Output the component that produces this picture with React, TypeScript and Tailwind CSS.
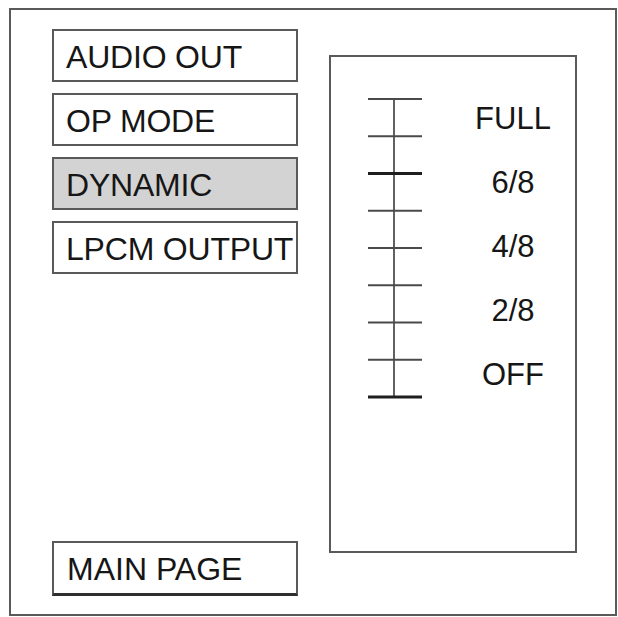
const menu = [
  { label: "AUDIO OUT", active: false },
  { label: "OP MODE", active: false },
  { label: "DYNAMIC", active: true },
  { label: "LPCM OUTPUT", active: false },
]

const levels = ["FULL", "6/8", "4/8", "2/8", "OFF"]

// 9 ticks, thick ones mark the current level and the bottom end
const ticks = [0, 1, 2, 3, 4, 5, 6, 7, 8]
const thick = [2, 8]

function Scale() {
  const step = 37.25
  return (
    <svg width="54" height="302" viewBox="0 0 54 302" className="block">
      <line x1="26" y1="1" x2="26" y2="299" stroke="#3a3a3a" strokeWidth="1.6" />
      {ticks.map((i) => (
        <line
          key={i}
          x1="0"
          x2="54"
          y1={1 + i * step}
          y2={1 + i * step}
          stroke={thick.includes(i) ? "#1e1e1e" : "#4a4a4a"}
          strokeWidth={thick.includes(i) ? 3 : 1.8}
        />
      ))}
    </svg>
  )
}

export default function App() {
  return (
    <div className="w-[618px] h-[617px] bg-white pl-[9px] pt-[8px] font-['Liberation_Sans',Arial,sans-serif] text-[#161616]">
      <div className="w-[608px] h-[608px] border-2 border-[#5a5a5a] flex pl-[41px] pt-[19px] pb-[18px]">
        {/* Menu column */}
        <div className="w-[246px] flex flex-col justify-between">
          <div className="flex flex-col gap-[11px]">
            {menu.map((item) => (
              <div
                key={item.label}
                className={`h-[53px] border-2 border-[#5a5a5a] flex items-center pl-[12px] pt-[3px] text-[32px] leading-none tracking-[-0.2px] whitespace-nowrap ${
                  item.active ? "bg-[#d3d3d3]" : "bg-white"
                }`}
              >
                {item.label}
              </div>
            ))}
          </div>
          <div className="h-[55px] border-2 border-b-[3px] border-[#5a5a5a] border-b-[#2e2e2e] flex items-center pl-[13px] pt-[2px] text-[32px] leading-none">
            MAIN PAGE
          </div>
        </div>

        {/* Dynamic range panel */}
        <div className="ml-[31px] mt-[26px] w-[248px] h-[498px] border-2 border-[#5a5a5a] flex items-start">
          <div className="ml-[37px] mt-[41px]">
            <Scale />
          </div>
          <div className="ml-[41px] mt-[29px] w-[100px] flex flex-col">
            {levels.map((lv) => (
              <div key={lv} className="h-[64px] flex items-center justify-center text-[31px] leading-none">
                {lv}
              </div>
            ))}
          </div>
        </div>
      </div>
    </div>
  )
}
